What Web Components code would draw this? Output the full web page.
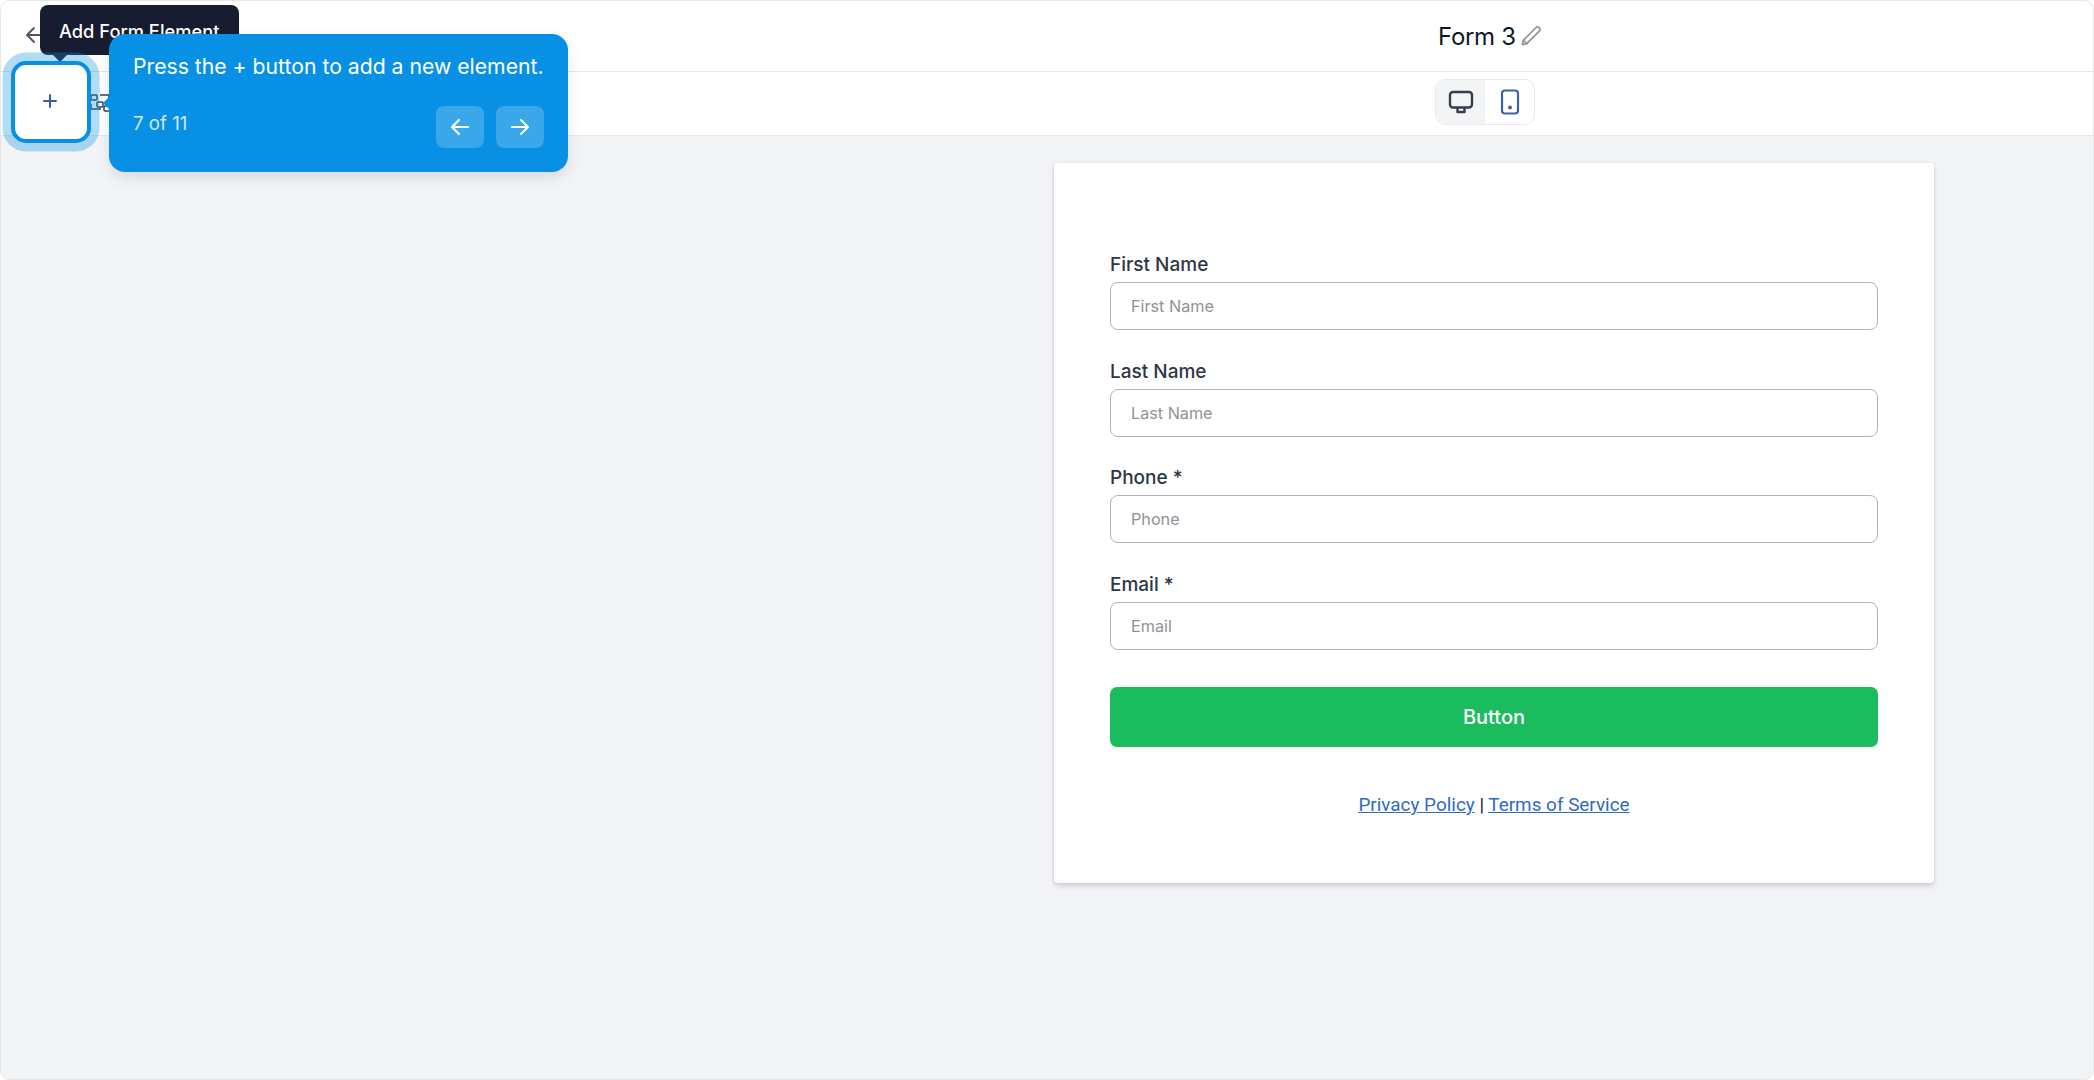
<!DOCTYPE html>
<html><head><meta charset="utf-8">
<style>
html,body{margin:0;padding:0;height:100%;background:#fff}
body{font-family:Inter,"Liberation Sans",sans-serif;overflow:hidden}
</style></head><body>
<builder-app>
  <builder-header slot="header" title-text="Form 3"></builder-header>
  <builder-toolbar slot="toolbar"></builder-toolbar>
  <form-card slot="canvas">
    <form-field label="First Name" placeholder="First Name"></form-field>
    <form-field label="Last Name" placeholder="Last Name"></form-field>
    <form-field label="Phone *" placeholder="Phone"></form-field>
    <form-field label="Email *" placeholder="Email"></form-field>
  </form-card>
  <tour-overlay slot="overlay"></tour-overlay>
</builder-app>
<script>
function def(name, css, html){
  customElements.define(name, class extends HTMLElement{
    connectedCallback(){
      if(this.shadowRoot) return;
      const r=this.attachShadow({mode:'open'});
      r.innerHTML='<style>'+css+'</style>'+(typeof html==='function'?html(this):html);
    }
  });
}
def('builder-app',`
:host{display:flex;flex-direction:column;box-sizing:border-box;height:1080px;width:2094px;border:1px solid #e5e7eb;border-radius:10px;overflow:hidden;position:relative;background:#f3f4f6}
.canvas{flex:1;display:flex;justify-content:flex-end;align-items:flex-start;padding:27px 159px 0 0}
`,`<slot name="header"></slot><slot name="toolbar"></slot><div class="canvas"><slot name="canvas"></slot></div><slot name="overlay"></slot>`);

def('builder-header',`
:host{display:flex;align-items:center;height:70px;background:#fff;border-bottom:1px solid #e5e7eb;position:relative;box-sizing:content-box;flex:none}
.back{margin:-2px 0 0 23px;width:20px;height:20px;color:#4b5563;display:flex}
.title{position:absolute;left:1437px;top:0;height:70px;display:flex;align-items:center;gap:5px;font-size:24px;color:#111827;letter-spacing:-.3px}
.title svg{margin-top:-1px}
svg{display:block}
`,h=>`<div class="back"><svg width="20" height="20" viewBox="0 0 20 20" fill="none" stroke="currentColor" stroke-width="1.8" stroke-linecap="round" stroke-linejoin="round"><path d="M19 10H3.500M10 3l-7 7 7 7"/></svg></div>
<div class="title"><span>${h.getAttribute('title-text')}</span><svg width="20" height="20" viewBox="2 2 18 18" fill="none" stroke="#8b8f96" stroke-width="1.4" stroke-linejoin="round" stroke-linecap="round"><path d="M3.200 18.800l.9-4L15.600 3.300a1.900 1.900 0 0 1 2.700 0l.4.4a1.900 1.900 0 0 1 0 2.700L7.200 17.900l-4 .9z"/><path d="M4.100 14.800l3.100 3.100"/></svg></div>`);

def('builder-toolbar',`
:host{display:flex;align-items:center;height:63px;background:#fff;border-bottom:1px solid #e5e7eb;position:relative;flex:none}
.ico{position:absolute;left:88px;top:20px;color:#374151}
.sw{position:absolute;left:1434px;top:7px;width:100px;height:46px;box-sizing:border-box;border:1px solid #e5e7eb;border-radius:10px;display:flex;overflow:hidden}
.sw div{flex:1;display:flex;align-items:center;justify-content:center}
.sw .on{background:#f3f4f6}
svg{display:block}
`,`<svg class="ico" width="26" height="24" viewBox="0 0 26 24" fill="none" stroke="currentColor" stroke-width="1.5" stroke-linejoin="round"><rect x="2" y="3" width="6" height="5" rx="1"/><rect x="8" y="10" width="6" height="5" rx="1"/><rect x="15" y="14" width="6" height="5" rx="1"/><path d="M2 12v5h10M11 3h9v6"/></svg>
<div class="sw"><div class="on"><svg width="26" height="24" viewBox="0 0 26 24" fill="none" stroke="#363d4c" stroke-width="2.400" stroke-linejoin="round"><rect x="2" y="2" width="22" height="15.500" rx="3"/><path d="M9.500 17.500v4.500h7v-4.500"/></svg></div>
<div><svg width="20" height="26" viewBox="0 0 20 26" fill="none" stroke="#3f62ad" stroke-width="2.200"><rect x="2" y="1.500" width="16" height="23" rx="3"/><circle cx="10" cy="18.500" r=".9" fill="#3f62ad"/></svg></div></div>`);

def('form-card',`
:host{display:block;width:880px;height:720px;box-sizing:border-box;background:#fff;border-radius:4px;box-shadow:0 3px 5px rgba(100,110,140,.25),0 0 3px rgba(100,110,140,.12);padding:90px 56px 0}
.btn{height:60px;margin-top:37px;background:#1abc5e;border-radius:7px;color:#fff;font-size:20px;font-weight:500;display:flex;align-items:center;justify-content:center}
.links{margin-top:46px;text-align:center;font-family:Roboto,"Liberation Sans",sans-serif;font-size:18.900px;color:#111827;line-height:24px}
a{color:#2f6bc4;text-decoration:underline}
`,`<slot></slot><div class="btn">Button</div><div class="links"><a>Privacy Policy</a> | <a>Terms of Service</a></div>`);

def('form-field',`
:host{display:block;margin-bottom:29.700px}
label{display:block;font-size:19px;font-weight:500;color:#2f3645;line-height:24px;height:24px;margin-bottom:5px}
.i{height:48px;box-sizing:border-box;border:1.500px solid #b0b2b8;border-radius:8px;display:flex;align-items:center;padding-left:20px;font-size:16.200px;color:#8f9297}
`,h=>`<label>${h.getAttribute('label')}</label><div class="i">${h.getAttribute('placeholder')}</div>`);

def('tour-overlay',`
:host{display:contents}
.target{position:absolute;left:10px;top:60px;width:80px;height:82px;box-sizing:border-box;background:#fff;border:4px solid #0891e4;border-radius:15px;box-shadow:0 0 0 8.500px rgba(8,145,228,.32);display:flex;align-items:center;justify-content:center}
.target svg{margin:-2px 2px 0 0}
.tip{position:absolute;left:39px;top:4px;width:199px;height:50px;box-sizing:border-box;background:#171c30;color:#fff;border-radius:8px;font-size:18.300px;font-weight:500;padding:14px 0 0 19px;white-space:nowrap;line-height:24px;overflow:hidden}
.tipArrow{position:absolute;left:52px;top:54px;width:0;height:0;border:7px solid transparent;border-top-color:#171c30;border-bottom:0}
.pop{position:absolute;left:108px;top:33px;width:459px;height:138px;box-sizing:border-box;background:#0891e4;border-radius:16px;color:#fff;padding:19px 24px;box-shadow:0 6px 14px rgba(60,70,100,.14);}
.pop::before{content:"";position:absolute;left:-6px;top:62px;border:7px solid transparent;border-left:0;border-right-color:#0891e4}
.msg{font-size:21.200px;line-height:27px;white-space:nowrap}
.foot{display:flex;align-items:center;justify-content:space-between;margin-top:26px}
.count{font-size:18.700px;color:#cfe8f9;margin-top:-7px}
.nav{display:flex;gap:12px}
.nav div{width:48px;height:42px;background:rgba(255,255,255,.2);border-radius:8px;display:flex;align-items:center;justify-content:center}
svg{display:block}
`,`<div class="tip">Add Form Element</div><div class="tipArrow"></div>
<div class="target"><svg width="14" height="14" viewBox="0 0 14 14" fill="none" stroke="#3b5aa0" stroke-width="2" stroke-linecap="round"><path d="M7 1v12M1 7h12"/></svg></div>
<div class="pop"><div class="msg">Press the + button to add a new element.</div>
<div class="foot"><span class="count">7 of 11</span><div class="nav">
<div><svg width="20" height="18" viewBox="0 0 20 18" fill="none" stroke="#fff" stroke-width="2.200" stroke-linecap="round" stroke-linejoin="round"><path d="M18 9H2M9 2L2 9l7 7"/></svg></div>
<div><svg width="20" height="18" viewBox="0 0 20 18" fill="none" stroke="#fff" stroke-width="2.200" stroke-linecap="round" stroke-linejoin="round"><path d="M2 9h16M11 2l7 7-7 7"/></svg></div>
</div></div></div>`);
</script>
</body></html>
